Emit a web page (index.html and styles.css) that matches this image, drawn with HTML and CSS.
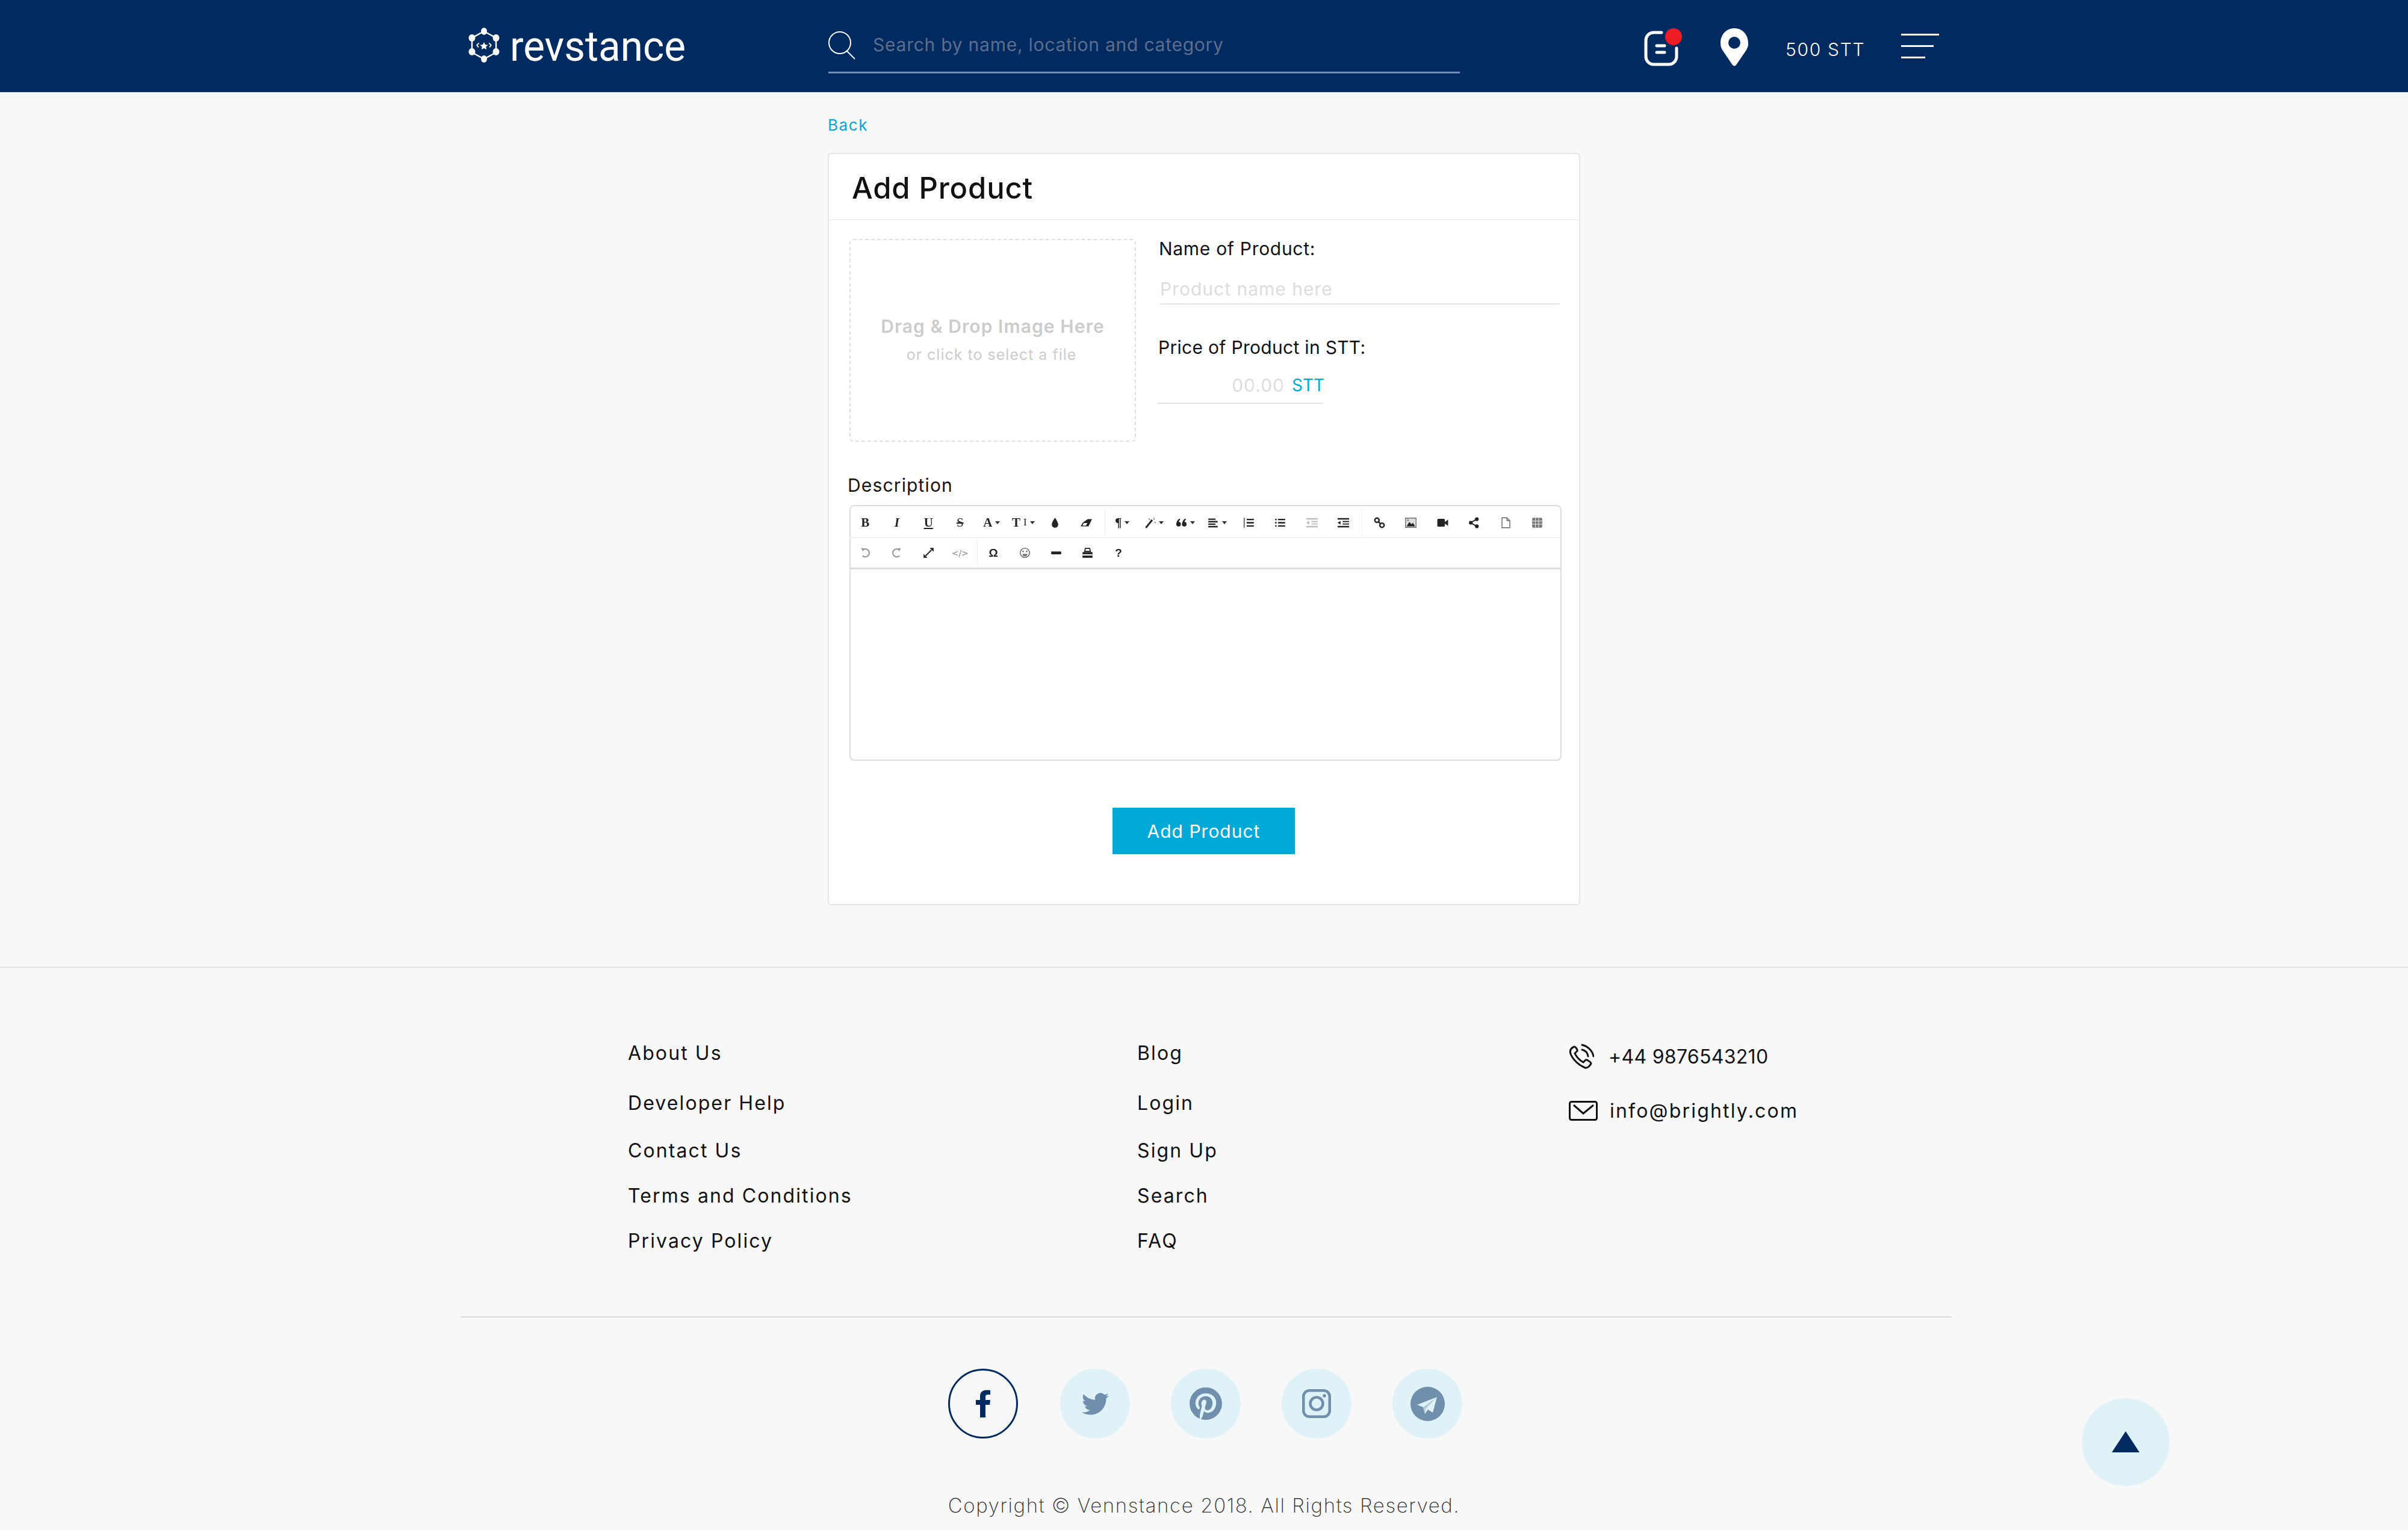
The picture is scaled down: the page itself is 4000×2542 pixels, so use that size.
FILE: index.html
```html
<!DOCTYPE html>
<html lang="en">
<head>
    <meta charset="UTF-8">
    <meta name="viewport" content="width=device-width, initial-scale=1.0">
    <title>Add Product</title>
    <link rel="stylesheet" href="styles.css">
</head>
<body>

<svg class="sprite" xmlns="http://www.w3.org/2000/svg">
    <symbol id="i-drop" viewBox="0 0 16 16"><path d="M8 1C8 1 3.500 7 3.500 10.500a4.500 4.500 0 0 0 9 0C12.500 7 8 1 8 1z"/></symbol>
    <symbol id="i-eraser" viewBox="0 0 16 16"><path d="M10 3h6l-5 10H0l3-5z"/><path d="M2.500 12l2-3.500h5l-2 3.500z" fill="#fff"/></symbol>
    <symbol id="i-magic" viewBox="0 0 16 16"><path d="M2 15L11 4" stroke="#222" stroke-width="2.400" fill="none"/><path d="M6 2l2 2M13 1l1 3M14 7l2 1" stroke="#777" stroke-width="1.200" fill="none"/></symbol>
    <symbol id="i-quote" viewBox="0 0 16 16"><circle cx="4" cy="10" r="3.200"/><circle cx="12" cy="10" r="3.200"/><path d="M1 10C1 6 3 3 6 2v2C4.500 5 4 7 4 9zM9 10c0-4 2-7 5-8v2c-1.500 1-2 3-2 5z"/></symbol>
    <symbol id="i-align" viewBox="0 0 16 16"><path d="M1 2h10v2H1zM1 5.500h13v2H1zM1 9h10v2H1zM1 12.500h13v2H1z"/></symbol>
    <symbol id="i-ol" viewBox="0 0 16 16"><path d="M1 1h1v14H1zM5 2.500h10v2H5zM5 7h10v2H5zM5 11.500h10v2H5z"/></symbol>
    <symbol id="i-ul" viewBox="0 0 16 16"><path d="M1 2.500h2v2H1zM1 7h2v2H1zM1 11.500h2v2H1zM5 2.500h10v2H5zM5 7h10v2H5zM5 11.500h10v2H5z"/></symbol>
    <symbol id="i-outdent" viewBox="0 0 16 16"><path d="M0 1.500h16v2H0zM7 5.500h9v1.600H7zM7 9h9v1.600H7zM0 12.500h16v2H0zM4 5.500v5L0 8z"/></symbol>
    <symbol id="i-link" viewBox="0 0 16 16"><g fill="none" stroke="#222" stroke-width="2"><circle cx="4.500" cy="4.500" r="3"/><circle cx="11.500" cy="11.500" r="3"/><path d="M6.500 6.500l3 3"/></g></symbol>
    <symbol id="i-image" viewBox="0 0 16 16"><rect x="0.500" y="1.500" width="15" height="13" fill="#ddd" stroke="#777" stroke-width="1.400"/><path d="M2 13l4-6 3 3 2-2 3 5z"/><circle cx="4" cy="4.500" r="1.300" fill="#888"/></symbol>
    <symbol id="i-video" viewBox="0 0 16 16"><rect x="0.500" y="2.500" width="10.500" height="11" rx="1.500"/><path d="M11 7l4.500-3.500v9L11 9z"/></symbol>
    <symbol id="i-share" viewBox="0 0 16 16"><path d="M12 3L3 8l9 5" stroke="#222" stroke-width="1.600" fill="none"/><circle cx="12" cy="3" r="2.600"/><circle cx="3.500" cy="8" r="2.600"/><circle cx="12" cy="13" r="2.600"/></symbol>
    <symbol id="i-file" viewBox="0 0 16 16"><path d="M2.500 1h7l4 4v10h-11zM9.500 1v4h4" fill="#fff" stroke="#666" stroke-width="1.200"/></symbol>
    <symbol id="i-table" viewBox="0 0 16 16"><rect x="1" y="1" width="14" height="14" rx="1.500" fill="#777"/><path d="M1 5.500h14M1 10h14M5.500 1v14M10 1v14" stroke="#ddd" stroke-width="1"/></symbol>
    <symbol id="i-undo" viewBox="0 0 16 16"><path d="M5 3.500a5.500 5.500 0 1 1-1 8.500" stroke="#999" stroke-width="1.800" fill="none"/><path d="M2 1l5 1-2.500 4z" fill="#999"/></symbol>
    <symbol id="i-redo" viewBox="0 0 16 16"><path d="M11 3.500a5.500 5.500 0 1 0 1 8.500" stroke="#999" stroke-width="1.800" fill="none"/><path d="M14 1l-5 1 2.500 4z" fill="#999"/></symbol>
    <symbol id="i-full" viewBox="0 0 16 16"><path d="M4 12l8-8" stroke="#222" stroke-width="1.600"/><path d="M9.500 1H15v5.500zM6.500 15H1V9.500z"/></symbol>
    <symbol id="i-smile" viewBox="0 0 16 16"><circle cx="8" cy="8" r="6.500" fill="none" stroke="#777" stroke-width="1.400"/><circle cx="5.500" cy="6" r="1.100" fill="#777"/><circle cx="10.500" cy="6" r="1.100" fill="#777"/><path d="M4.500 9.500a3.500 3.500 0 0 0 7 0z" fill="#777"/></symbol>
    <symbol id="i-minus" viewBox="0 0 16 16"><rect x="1" y="6" width="14" height="4" rx="1"/></symbol>
    <symbol id="i-print" viewBox="0 0 16 16"><path d="M5 1.800h6l1 4.200H4z" fill="none" stroke="#222" stroke-width="1.400"/><path d="M2 7h12a1 1 0 0 1 1 1v6a1 1 0 0 1-1 1H2a1 1 0 0 1-1-1V8a1 1 0 0 1 1-1z"/><rect x="1" y="10" width="14" height="1.800" fill="#fff"/></symbol>
</svg>

<header class="topbar">
    <a class="logo" href="#">
        <svg class="logo-mark" width="52" height="58" viewBox="0 0 52 58">
            <path d="M26 6L46 17V41L26 52L6 41V17z" fill="none" stroke="#fff" stroke-width="2.500"/>
            <g fill="#fff">
                <ellipse cx="26" cy="6" rx="5" ry="6"/>
                <ellipse cx="46" cy="17" rx="5.500" ry="6"/>
                <ellipse cx="46" cy="40" rx="5.500" ry="6"/>
                <ellipse cx="26" cy="52" rx="5" ry="6"/>
                <ellipse cx="6" cy="40" rx="5.500" ry="6"/>
                <ellipse cx="6" cy="17" rx="5.500" ry="6"/>
                <path d="M26 24l2 4.200 4.500.6-3.300 3 .9 4.400L26 34l-4.100 2.200.9-4.400-3.300-3 4.500-.6z"/>
                <path d="M17 25l1.500 1-3 3 2 3.500-1.500.5-3-4zM35 25l-1.500 1 3 3-2 3.500 1.500.5 3-4z"/>
            </g>
        </svg>
        <span class="logo-text">revstance</span>
    </a>
    <form class="search">
        <svg width="46" height="47" viewBox="0 0 46 47">
            <circle cx="19" cy="19" r="18" fill="none" stroke="#fff" stroke-width="2"/>
            <path d="M31 33l14 14" stroke="#fff" stroke-width="2" transform="translate(-1 -1)"/>
        </svg>
        <input type="text" placeholder="Search by name, location and category">
    </form>
    <div class="top-actions">
        <svg width="63" height="63" viewBox="0 0 63 63">
            <path d="M29 7H16A13 13 0 0 0 3 20V47A13 13 0 0 0 16 60H41A13 13 0 0 0 54 47V33" fill="none" stroke="#fff" stroke-width="5" stroke-linecap="round"/>
            <path d="M21 29H34M21 40H34" stroke="#fff" stroke-width="5" stroke-linecap="round"/>
            <circle cx="49" cy="14" r="14" fill="#ed1c24"/>
        </svg>
        <svg class="pin" width="46" height="63" viewBox="0 0 46 63">
            <path fill-rule="evenodd" fill="#fff" d="M23 0C10 0 0 10 0 25C0 30 1 32 3 36L20 61Q23 64 26 61L43 36C45 32 46 30 46 25C46 10 36 0 23 0ZM23 14A10 10 0 1 1 23 34A10 10 0 1 1 23 14Z"/>
        </svg>
        <span class="balance">500 STT</span>
        <div class="burger"><span></span><span></span><span></span></div>
    </div>
</header>

<main class="page">
    <a class="back" href="#">Back</a>
    <section class="card">
        <h1 class="card-title">Add Product</h1>
        <form class="card-body">
            <div class="product-top">
                <div class="dropzone">
                    <p class="drop-main">Drag &amp; Drop Image Here</p>
                    <p class="drop-sub">or click to select a file</p>
                </div>
                <div class="product-fields">
                    <label class="field-label name-label">Name of Product:</label>
                    <input class="name-input" type="text" placeholder="Product name here">
                    <label class="field-label price-label">Price of Product in STT:</label>
                    <div class="price-row">
                        <input class="price-input" type="text" placeholder="00.00">
                        <span class="price-unit">STT</span>
                    </div>
                </div>
            </div>

            <label class="field-label desc-label">Description</label>
            <div class="editor">
                <div class="toolbar">
                    <div class="tb-group">
                        <span class="tb-btn tb-serif">B</span>
                        <span class="tb-btn tb-serif tb-italic">I</span>
                        <span class="tb-btn tb-serif tb-under">U</span>
                        <span class="tb-btn tb-serif tb-strike">S</span>
                        <span class="tb-btn tb-serif">A<i class="caret"></i></span>
                        <span class="tb-btn tb-serif">T<small>I</small><i class="caret"></i></span>
                        <span class="tb-btn"><svg><use href="#i-drop"/></svg></span>
                        <span class="tb-btn"><svg><use href="#i-eraser"/></svg></span>
                    </div>
                    <div class="tb-group">
                        <span class="tb-btn tb-serif">¶<i class="caret"></i></span>
                        <span class="tb-btn"><svg><use href="#i-magic"/></svg><i class="caret"></i></span>
                        <span class="tb-btn"><svg><use href="#i-quote"/></svg><i class="caret"></i></span>
                        <span class="tb-btn"><svg><use href="#i-align"/></svg><i class="caret"></i></span>
                        <span class="tb-btn"><svg><use href="#i-ol"/></svg></span>
                        <span class="tb-btn"><svg><use href="#i-ul"/></svg></span>
                        <span class="tb-btn tb-off"><svg><use href="#i-outdent"/></svg></span>
                        <span class="tb-btn"><svg><use href="#i-outdent"/></svg></span>
                    </div>
                    <div class="tb-group tb-last">
                        <span class="tb-btn"><svg><use href="#i-link"/></svg></span>
                        <span class="tb-btn"><svg><use href="#i-image"/></svg></span>
                        <span class="tb-btn"><svg><use href="#i-video"/></svg></span>
                        <span class="tb-btn"><svg><use href="#i-share"/></svg></span>
                        <span class="tb-btn"><svg><use href="#i-file"/></svg></span>
                        <span class="tb-btn"><svg><use href="#i-table"/></svg></span>
                    </div>
                </div>
                <div class="toolbar toolbar-second">
                    <div class="tb-group">
                        <span class="tb-btn"><svg><use href="#i-undo"/></svg></span>
                        <span class="tb-btn"><svg><use href="#i-redo"/></svg></span>
                        <span class="tb-btn"><svg><use href="#i-full"/></svg></span>
                        <span class="tb-btn tb-code">&lt;/&gt;</span>
                    </div>
                    <div class="tb-group tb-last">
                        <span class="tb-btn tb-omega">Ω</span>
                        <span class="tb-btn"><svg><use href="#i-smile"/></svg></span>
                        <span class="tb-btn"><svg><use href="#i-minus"/></svg></span>
                        <span class="tb-btn"><svg><use href="#i-print"/></svg></span>
                        <span class="tb-btn tb-omega">?</span>
                    </div>
                </div>
                <div class="editor-area"></div>
            </div>

            <button class="submit" type="button">Add Product</button>
        </form>
    </section>
</main>

<footer class="footer">
    <div class="footer-links">
        <ul class="link-col">
            <li><a href="#">About Us</a></li>
            <li><a href="#">Developer Help</a></li>
            <li><a href="#">Contact Us</a></li>
            <li><a href="#">Terms and Conditions</a></li>
            <li><a href="#">Privacy Policy</a></li>
        </ul>
        <ul class="link-col link-col-mid">
            <li><a href="#">Blog</a></li>
            <li><a href="#">Login</a></li>
            <li><a href="#">Sign Up</a></li>
            <li><a href="#">Search</a></li>
            <li><a href="#">FAQ</a></li>
        </ul>
        <div class="contact">
            <div class="contact-row">
                <svg width="42" height="42" viewBox="0 0 42 42" fill="none" stroke="#111" stroke-width="3" stroke-linecap="round">
                    <path d="M9 5C4 7 1 11 3 17C7 27 17 36 27 40C31 41 35 37 37 33C37 31 30 26 28 27L24 31C18 28 12 21 10 16L14 12C15 10 11 5 9 5Z"/>
                    <path d="M22 2C31 4 39 11 41 21M22 10C27 11 31 15 32 21"/>
                </svg>
                <span>+44 9876543210</span>
            </div>
            <div class="contact-row contact-mail">
                <svg width="48" height="33" viewBox="0 0 48 33" fill="none" stroke="#111" stroke-width="3">
                    <rect x="1.500" y="1.500" width="45" height="30" rx="3"/>
                    <path d="M8 7L24 21L41 7"/>
                </svg>
                <span>info@brightly.com</span>
            </div>
        </div>
    </div>

    <hr class="footer-rule">

    <div class="socials">
        <a class="social social-active" href="#">
            <svg width="24" height="46" viewBox="0 0 24 46"><path fill="#012a60" d="M16 46V25H23L24 17H16V12C16 9.500 17 8 20 8H24V1C23 .8 21 .5 18 .5C11 .5 7 4.500 7 11V17H0V25H7V46Z"/></svg>
        </a>
        <a class="social" href="#">
            <svg width="45" height="37" viewBox="0 0 24 20" preserveAspectRatio="none"><path transform="translate(0 -2)" d="M23.953 4.570a10 10 0 01-2.825.775 4.958 4.958 0 002.163-2.723c-.951.555-2.005.959-3.127 1.184a4.920 4.920 0 00-8.384 4.482C7.690 8.095 4.067 6.130 1.640 3.162a4.822 4.822 0 00-.666 2.475c0 1.710.870 3.213 2.188 4.096a4.904 4.904 0 01-2.228-.616v.060a4.923 4.923 0 003.946 4.827 4.996 4.996 0 01-2.212.085 4.936 4.936 0 004.604 3.417 9.867 9.867 0 01-6.102 2.105c-.390 0-.779-.023-1.170-.067a13.995 13.995 0 007.557 2.209c9.053 0 13.998-7.496 13.998-13.985 0-.210 0-.420-.015-.630A9.935 9.935 0 0024 4.590z"/></svg>
        </a>
        <a class="social" href="#">
            <svg width="54" height="54" viewBox="0 0 24 24"><path d="M12.017 0C5.396 0 .029 5.367.029 11.987c0 5.079 3.158 9.417 7.618 11.162-.105-.949-.199-2.403.041-3.439.219-.937 1.406-5.957 1.406-5.957s-.359-.720-.359-1.781c0-1.663.967-2.911 2.168-2.911 1.024 0 1.518.769 1.518 1.688 0 1.029-.653 2.567-.992 3.992-.285 1.193.600 2.165 1.775 2.165 2.128 0 3.768-2.245 3.768-5.487 0-2.861-2.063-4.869-5.008-4.869-3.410 0-5.409 2.562-5.409 5.199 0 1.033.394 2.143.889 2.741.099.120.112.225.085.345-.090.375-.293 1.199-.334 1.363-.053.225-.172.271-.401.165-1.495-.690-2.433-2.878-2.433-4.646 0-3.776 2.748-7.252 7.920-7.252 4.158 0 7.392 2.967 7.392 6.923 0 4.135-2.607 7.462-6.233 7.462-1.214 0-2.354-.629-2.758-1.379l-.749 2.848c-.269 1.045-1.004 2.352-1.498 3.146 1.123.345 2.306.535 3.550.535 6.607 0 11.985-5.365 11.985-11.987C23.970 5.390 18.592.026 11.985.026L12.017 0z"/></svg>
        </a>
        <a class="social" href="#">
            <svg width="48" height="48" viewBox="0 0 48 48" fill="none" stroke="#6f8fac" stroke-width="4.500">
                <rect x="2.250" y="2.250" width="43.500" height="43.500" rx="10"/>
                <circle cx="24" cy="24" r="10.500"/>
                <circle cx="37" cy="11" r="2.800" fill="#6f8fac" stroke="none"/>
            </svg>
        </a>
        <a class="social" href="#">
            <svg width="57" height="57" viewBox="0 0 57 57">
                <circle cx="28.500" cy="28.500" r="28.500"/>
                <path fill="#dff2f7" d="M44 17L11 30L21 34L24 45L29 38L37 43Z"/>
                <path fill="#b4cbd9" d="M21 34L44 17L25 37L24 45Z"/>
            </svg>
        </a>
    </div>

    <p class="copyright">Copyright © Vennstance 2018. All Rights Reserved.</p>

    <a class="to-top" href="#"><span class="to-top-arrow"></span></a>
</footer>

</body>
</html>
```

FILE: styles.css
```css
* {
    box-sizing: border-box;
}
body {
    margin: 0;
    position: relative;
    background-color: #f8f8f8;
    color: #111;
    font-family: Inter, "Noto Sans", sans-serif;
}
a {
    color: inherit;
    text-decoration: none;
}
input {
    font-family: inherit;
    background: none;
    border: 0;
    outline: 0;
    padding: 0;
}
.sprite {
    display: none;
}

/* top bar */
.topbar {
    display: flex;
    align-items: center;
    height: 154px;
    padding-left: 778px;
    background-color: #012a60;
    border-bottom: 1px solid #d5dee8;
}
.logo {
    display: flex;
    align-items: center;
    width: 598px;
    gap: 17px;
    color: #fff;
}
.logo-mark {
    flex: none;
    margin-top: -3px;
}
.logo-text {
    font-family: Roboto, sans-serif;
    font-size: 71px;
    line-height: 58px;
    transform-origin: left center;
    transform: scaleX(0.95);
}
.search {
    display: flex;
    align-items: flex-start;
    gap: 28px;
    width: 1049px;
    height: 72px;
    margin-top: 18px;
    padding-top: 2px;
    border-bottom: 3px solid #7a8db0;
}
.search input {
    flex: 1;
    height: 44px;
    font-size: 30px;
    letter-spacing: 0.750px;
    color: #fff;
}
.search input::placeholder {
    color: #5d6d8d;
    opacity: 1;
}
.top-actions {
    display: flex;
    align-items: center;
    margin-left: 306px;
    margin-top: 3px;
}
.pin {
    margin-left: 64px;
}
.balance {
    margin-left: 62px;
    margin-top: 7px;
    color: #fff;
    font-size: 30px;
    font-weight: 300;
    letter-spacing: 1.700px;
}
.burger {
    display: flex;
    flex-direction: column;
    gap: 16px;
    margin-left: 60px;
    margin-top: -3px;
}
.burger span {
    display: block;
    height: 3px;
    width: 63px;
    background-color: #fff;
}
.burger span:nth-child(2) {
    width: 54px;
}
.burger span:nth-child(3) {
    width: 40px;
}

/* product card */
.page {
    width: 1250px;
    margin: 0 auto;
    padding-top: 33px;
}
.back {
    display: block;
    height: 40px;
    margin-bottom: 27px;
    color: #00a9d6;
    font-size: 26px;
    line-height: 42px;
    letter-spacing: 1.600px;
}
.card {
    height: 1250px;
    background-color: #fff;
    border: 2px solid #e6e6e6;
    border-radius: 6px;
}
.card-title {
    height: 110px;
    margin: 0;
    padding-left: 38px;
    border-bottom: 2px solid #f0f0f0;
    color: #111;
    font-size: 49px;
    font-weight: 500;
    line-height: 114px;
    letter-spacing: 0.850px;
}
.card-body {
    padding: 31px 35px 0 34px;
}
.product-top {
    display: grid;
    grid-template-columns: 476px 1fr;
    column-gap: 40px;
}
.dropzone {
    height: 337px;
    padding-top: 121px;
    border: 2px dashed #e0e0e0;
    border-radius: 6px;
    text-align: center;
    color: #ccc;
}
.drop-main {
    margin: 0;
    font-size: 30px;
    font-weight: 600;
    line-height: 44px;
    letter-spacing: 1.100px;
}
.drop-sub {
    margin: 5px 0 0;
    font-size: 25px;
    line-height: 40px;
    letter-spacing: 1px;
    padding-right: 4px;
}
.field-label {
    display: block;
    height: 40px;
    color: #111;
    font-size: 30px;
    line-height: 40px;
    letter-spacing: 0.700px;
}
.product-fields {
    margin: -4px -3px 0 0;
}
.name-label {
    margin-left: -2px;
}
.name-input {
    display: block;
    width: 100%;
    height: 51px;
    margin-top: 22px;
    border-bottom: 2px solid #e4e4e4;
    font-size: 30px;
    letter-spacing: 1px;
}
.name-input::placeholder,
.price-input::placeholder {
    color: #ddd;
    opacity: 1;
}
.price-label {
    margin: 51px 0 0 -3px;
    letter-spacing: 0.300px;
}
.price-row {
    display: flex;
    align-items: center;
    gap: 12px;
    width: 275px;
    height: 52px;
    margin: 22px 0 0 -4px;
    padding-bottom: 8px;
    border-bottom: 2px solid #e4e4e4;
}
.price-input {
    width: 211px;
    font-size: 30px;
    text-align: right;
    letter-spacing: 1px;
}
.price-unit {
    color: #00a9d6;
    font-size: 28px;
    letter-spacing: 0;
}
.desc-label {
    margin: 52px 0 0 -3px;
    letter-spacing: 1.150px;
}

/* editor */
.editor {
    width: 1183px;
    height: 425px;
    margin-top: 13px;
    border: 2px solid #ddd;
    border-radius: 8px;
}
.toolbar {
    display: flex;
    height: 53px;
    margin-left: -2px;
    padding-top: 3px;
    border-bottom: 2px solid #f3f3f3;
    filter: blur(0.400px);
}
.toolbar-second {
    height: 49px;
    padding-top: 0;
    border-bottom: 0;
}
.tb-group {
    display: flex;
    align-items: center;
    padding-right: 4px;
    margin-right: 2px;
    border-right: 1px solid #f0f0f0;
}
.tb-last {
    border-right: 0;
}
.tb-btn {
    display: flex;
    align-items: center;
    justify-content: center;
    gap: 5px;
    width: 52.500px;
    height: 100%;
    fill: #222;
    color: #222;
}
.tb-btn svg {
    width: 19px;
    height: 19px;
}
.tb-off {
    opacity: 0.300;
}
.tb-serif {
    font-family: "Liberation Serif", serif;
    font-size: 21px;
    font-weight: 700;
}
.tb-serif small {
    font-size: 17px;
    font-weight: 400;
}
.tb-italic {
    font-style: italic;
}
.tb-under {
    text-decoration: underline;
}
.tb-strike {
    text-decoration: line-through;
    font-weight: 400;
}
.tb-code {
    font-family: "DejaVu Sans", sans-serif;
    font-size: 14px;
    color: #888;
}
.tb-omega {
    font-family: "Liberation Sans", sans-serif;
    font-size: 19px;
    font-weight: 700;
}
.toolbar-second .tb-last .tb-btn {
    width: 52px;
}
.toolbar-second .tb-group:first-child {
    padding-right: 2px;
    margin-right: 0;
}
.caret {
    width: 0;
    height: 0;
    border-left: 4px solid transparent;
    border-right: 4px solid transparent;
    border-top: 5px solid #333;
}
.editor-area {
    height: 319px;
    border-top: 3px solid #ddd;
}
.submit {
    display: block;
    width: 303px;
    height: 77px;
    margin: 78px auto 0;
    border: 0;
    background-color: #00a9d6;
    color: #fff;
    font-family: inherit;
    font-size: 30px;
    letter-spacing: 1px;
}

/* footer */
.footer {
    margin-top: 102px;
    padding-top: 122px;
    padding-bottom: 21px;
    border-top: 2px solid #e2e2e2;
}
.footer-links {
    display: grid;
    grid-template-columns: 846px 717px 1fr;
    padding-left: 1043px;
}
.link-col {
    margin: 0;
    padding: 0;
    list-style: none;
}
.link-col li {
    height: 40px;
    margin-bottom: 35px;
    font-size: 32px;
    line-height: 40px;
    letter-spacing: 2.100px;
}
.link-col li:nth-child(1) {
    margin-bottom: 43px;
}
.link-col li:nth-child(2) {
    margin-bottom: 39px;
}
.link-col li:last-child {
    margin-bottom: 0;
}
.contact-row {
    display: flex;
    align-items: center;
    gap: 24px;
    height: 42px;
    margin-top: 4px;
    font-size: 32px;
    letter-spacing: 0.300px;
}
.contact-mail {
    margin-top: 48px;
    gap: 20px;
    letter-spacing: 2.200px;
}
.footer-rule {
    width: 2477px;
    height: 2px;
    margin: 105px 0 0 765px;
    border: 0;
    background-color: #ddd;
}
.socials {
    display: flex;
    gap: 68px;
    margin: 85px 0 0 1575px;
}
.social {
    display: flex;
    align-items: center;
    justify-content: center;
    width: 116px;
    height: 116px;
    border-radius: 50%;
    background-color: #dff2f7;
    fill: #6f8fac;
}
.social-active {
    margin-right: 2px;
    background: none;
    border: 3px solid #012a60;
}
.copyright {
    height: 40px;
    margin: 91px 0 0;
    color: #333;
    font-size: 33px;
    font-weight: 200;
    line-height: 40px;
    letter-spacing: 1.600px;
    text-align: center;
}
.to-top {
    position: absolute;
    left: 3458px;
    top: 2323px;
    display: flex;
    align-items: center;
    justify-content: center;
    width: 146px;
    height: 146px;
    border-radius: 50%;
    background-color: #dff2f7;
}
.to-top-arrow {
    width: 0;
    height: 0;
    margin-top: -2px;
    border-left: 23px solid transparent;
    border-right: 23px solid transparent;
    border-bottom: 35px solid #012a60;
}
```
